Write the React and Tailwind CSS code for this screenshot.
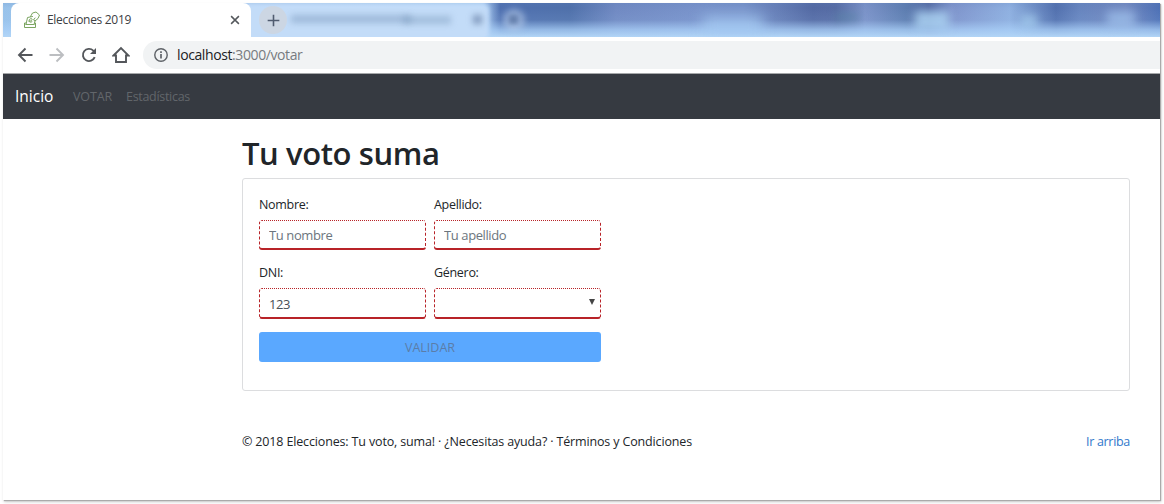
import React from "react";

function BallotIcon() {
  return (
    <svg className="h-[18px] w-[18px] shrink-0" viewBox="0 0 18 18" fill="none" stroke="#7ba561" strokeWidth="1" strokeLinejoin="round" strokeLinecap="round">
      <path d="M3 12H1.500v4.500h11V12H11.500" />
      <path d="M3 13.500 4.500 6.500l5-1M11 13.500l1.200-4" />
      <path d="M3 13.500h8" />
      <path d="M6 10.200c2 0 3.300-.700 3.100-1.900S6.700 7.400 6.200 9.200s1 2.600 2.700 1.600" />
      <path d="M7.500 5.500 9.500 2l3.500-1 3.500 3-1.500 3.500-3 2.500-1.500-1 1.500-2" />
    </svg>
  );
}

function Stroke({ children, className }) {
  return (
    <svg className={className} viewBox="0 0 18 18" fill="none" strokeWidth="1.9">
      {children}
    </svg>
  );
}

function TabStrip() {
  return (
    <div className="relative flex h-[34px] shrink-0 overflow-hidden bg-[linear-gradient(90deg,#98c2ea_0%,#b9d7f7_24%,#b4d6f8_41.5%,#4f70b0_43%,#4f70aa_49%,#7089c2_53%,#7892ca_60%,#7792c9_64%,#5369a3_70%,#576ca5_72%,#7b92c8_74.5%,#5d7db0_78%,#5369a2_80%,#7e93cb_82%,#8fb0e0_87%,#5270ae_91%,#6684be_93%,#7288bf_97%,#4d70b5_100%)]">
      <div className="absolute inset-0 bg-[linear-gradient(180deg,rgba(92,125,180,0.15)_0%,rgba(170,208,248,0)_15%,rgba(170,208,248,0.1)_50%,rgba(170,208,248,0.75)_78%,#b2d5f6_100%)]" />
      <div className="absolute left-[700px] top-[14px] h-[16px] w-[60px] bg-[#a6ccf4]/80 blur-[7px]" />
      <div className="absolute left-[912px] top-[8px] h-[18px] w-[34px] bg-[#b0d8f6]/80 blur-[5px]" />
      <div className="absolute left-[832px] top-[10px] h-[8px] w-[24px] bg-[#4f81a0]/50 blur-[4px]" />
      <div className="absolute left-[1018px] top-[12px] h-[12px] w-[16px] bg-[#a5cff0]/70 blur-[4px]" />
      <div className="absolute left-[1104px] top-[8px] h-[16px] w-[28px] bg-[#9fc3ee]/70 blur-[5px]" />
      <div className="absolute left-[240px] top-[1px] h-[36px] w-[246px] rounded-md bg-[#c3dcf8] blur-[2px]" />
      <div className="absolute left-[288px] top-[12px] h-[8px] w-[120px] bg-[#7190b5]/45 blur-[3px]" />
      <div className="absolute left-[400px] top-[13px] h-[8px] w-[48px] bg-[#7190b5]/40 blur-[3px]" />
      <div className="absolute left-[470px] top-[12px] size-[9px] bg-[#566f98]/60 blur-[3px]" />
      <div className="absolute left-[500px] top-[6px] size-[22px] rounded-full bg-[#b6cbe9]/60 blur-[3px]" />
      <div className="absolute left-[506px] top-[12px] size-[9px] bg-[#56709e]/70 blur-[2px]" />
      <div className="relative z-10 ml-2 flex w-[240px] items-center rounded-t-[8px] bg-white pl-[12px] pr-[9px]">
        <BallotIcon />
        <span className="ml-[6px] text-[12px] leading-4 tracking-[-0.3px] whitespace-nowrap text-[#3c4043]">Elecciones 2019</span>
        <Stroke className="ml-auto size-[14px] stroke-[#54585c]"><path d="m4 4 10 10M14 4 4 14" /></Stroke>
      </div>
      <div className="relative z-10 ml-[8px] mt-[3px] flex size-[28px] items-center justify-center rounded-full bg-[#ccd6e3]">
        <Stroke className="size-[15px] stroke-[#505c70]"><path d="M9 2v14M2 9h14" /></Stroke>
      </div>
    </div>
  );
}

function Toolbar() {
  return (
    <div className="flex h-[37px] shrink-0 items-center border-b border-[#a6a8aa] bg-white pl-[13px]">
      <Stroke className="size-[18px] stroke-[#54575b]"><path d="M16.500 9H3M9.500 2.500 3 9l6.500 6.500" /></Stroke>
      <Stroke className="ml-[14px] size-[18px] stroke-[#bcbec1]"><path d="M1.500 9H15M8.500 2.500 15 9l-6.500 6.500" /></Stroke>
      <Stroke className="ml-[14px] size-[18px] stroke-[#54575b]">
        <path d="M14.700 11.200A6.100 6.100 0 1 1 13.300 4.600L14.500 6" />
        <path d="M16 2v6h-6z" className="fill-[#54575b]" stroke="none" />
      </Stroke>
      <Stroke className="ml-[14px] size-[18px] stroke-[#54575b]"><path d="M1.500 9.500 9 2l7.500 7.500H14V16H4V9.500z" /></Stroke>
      <div className="ml-[13px] flex h-[28px] flex-1 items-center rounded-l-full bg-[#f1f3f4] pl-[10px]">
        <Stroke className="size-[16px] stroke-[#5f6368]">
          <circle cx="9" cy="9" r="7" strokeWidth="1.600" />
          <path d="M9 8v5M9 4.800v1.900" />
        </Stroke>
        <span className="ml-[8px] text-[14px] leading-5 whitespace-nowrap tracking-[-0.4px] text-[#777b80]">
          <span className="text-[#202124]">localhost</span>:3000/votar
        </span>
      </div>
    </div>
  );
}

const control =
  "block w-full rounded-[3px] border border-b-2 border-dashed border-[#b82328] [border-top-style:dotted] [border-bottom-style:solid] bg-white px-[9px] text-[13px] tracking-[-0.4px] text-[#495057] placeholder:text-[#6c757d] outline-none";

function Field({ label, children }) {
  return (
    <label className="block">
      <span className="block h-[24px] text-[12.500px] leading-[18px] tracking-[-0.3px] text-[#212529]">{label}</span>
      {children}
    </label>
  );
}

export default function App() {
  return (
    <div className="h-[504px] w-[1164px] overflow-hidden bg-white pl-[3px] pt-[3px] font-['Open_Sans','Noto_Sans',sans-serif]">
      <div className="flex h-[497px] w-[1157px] flex-col bg-white shadow-[1px_1px_1px_#aaa,1px_2px_3px_#ccc]">
        <TabStrip />
        <Toolbar />
        <nav className="flex h-[45px] shrink-0 items-center bg-[#363a41] pl-[12px] text-[12.500px] text-[#62666b]">
          <a className="w-[58px] text-[15.500px] tracking-[0px] text-white">Inicio</a>
          <a className="w-[53px] pt-[2px] tracking-[-0.1px]">VOTAR</a>
          <a className="pt-[2px] tracking-[-0.3px]">Estadísticas</a>
        </nav>
        <main className="ml-[239px] w-[888px]">
          <h1 className="h-[59px] pt-[15px] text-[31px] leading-[38px] font-semibold tracking-[-0.4px] text-[#212529]">Tu voto suma</h1>
          <form className="h-[213px] rounded-[3px] border border-[#dcdddf] px-[16px] pt-[17px]">
            <div className="grid w-[342px] grid-cols-2 gap-x-[8px]">
              <Field label="Nombre:"><input className={`${control} h-[30px]`} placeholder="Tu nombre" /></Field>
              <Field label="Apellido:"><input className={`${control} h-[30px]`} placeholder="Tu apellido" /></Field>
            </div>
            <div className="mt-[14px] grid w-[342px] grid-cols-2 gap-x-[8px]">
              <Field label="DNI:"><input className={`${control} h-[31px] pt-[2px]`} defaultValue="123" /></Field>
              <Field label="Género:">
                <div className={`${control} flex h-[31px] items-center justify-end pr-[5px]!`}>
                  <svg className="mb-[2px] h-[6px] w-[6px]" viewBox="0 0 6 6"><path d="M0 0h6L3 6z" fill="#444" /></svg>
                </div>
              </Field>
            </div>
            <button type="button" className="mt-[13px] block h-[30px] w-[342px] rounded-[3px] bg-[#5aa8ff] pt-[2px] text-[12.500px] tracking-[0px] text-[#5b7da8]">VALIDAR</button>
          </form>
          <footer className="mt-[41px] flex justify-between text-[12.500px] leading-[20px] text-[#212529]">
            <p className="tracking-[-0.15px]">© 2018 Elecciones: Tu voto, suma! · ¿Necesitas ayuda? · Términos y Condiciones</p>
            <a className="tracking-[-0.3px] text-[#3078cb]">Ir arriba</a>
          </footer>
        </main>
      </div>
    </div>
  );
}
